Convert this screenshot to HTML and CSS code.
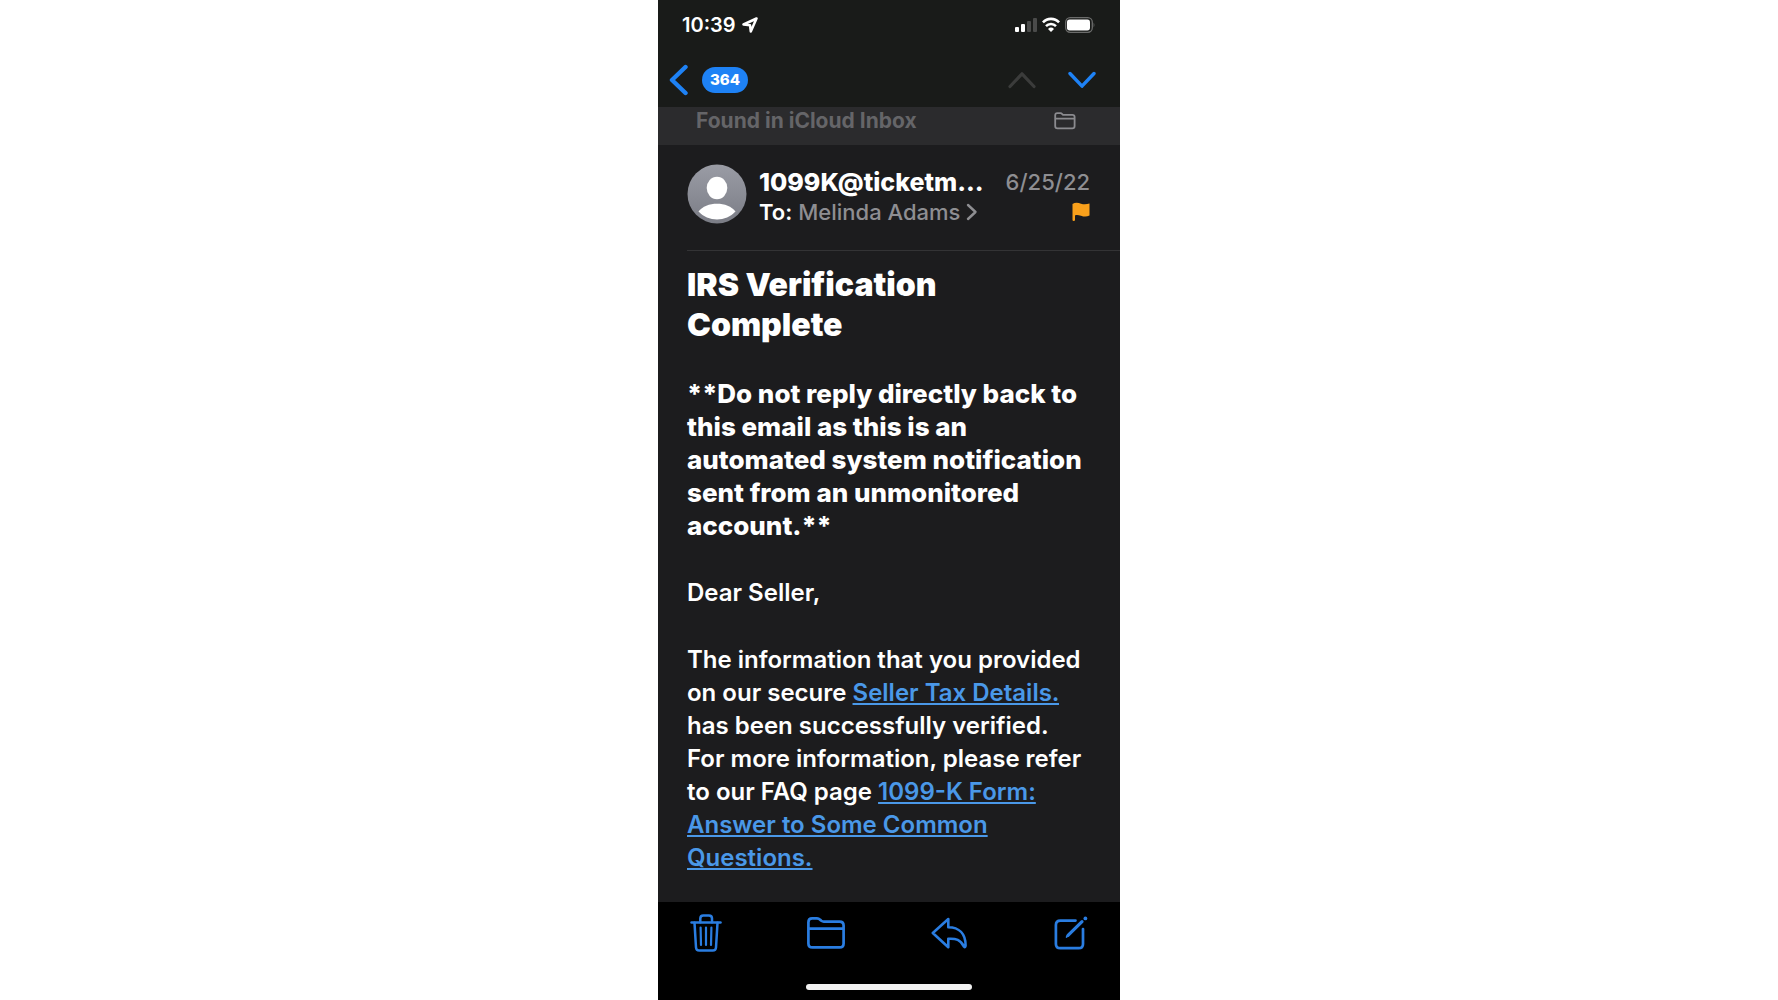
FILE: index.html
```html
<!DOCTYPE html>
<html lang="en">
<head>
  <meta charset="UTF-8" />
  <meta name="viewport" content="width=device-width, initial-scale=1.0" />
  <title>IRS Verification Complete</title>
  <link rel="stylesheet" href="styles.css">
</head>
<body>
  <div class="phone">
    <header class="top">
      <div class="status-bar">
        <span class="time">10:39</span>
        <svg class="location" width="16" height="16" viewBox="0 0 16 16">
          <path d="M14.5 1.5 L1.5 7.5 L8 8.2 L8.8 14.5 Z" fill="none" stroke="#fff" stroke-width="2.5" stroke-linejoin="round"/>
        </svg>
        <div class="status-icons">
          <svg width="22" height="16" viewBox="0 0 22 16">
            <rect x="0" y="10" width="4" height="5" rx="1" fill="#fff"/>
            <rect x="6" y="7" width="4" height="8" rx="1" fill="#fff"/>
            <rect x="12" y="4" width="4" height="11" rx="1" fill="#4a4b4a"/>
            <rect x="18" y="1" width="4" height="14" rx="1" fill="#4a4b4a"/>
          </svg>
          <svg width="18" height="16" viewBox="0 0 18 16">
            <path d="M0.9 5.4 A11 11 0 0 1 17.1 5.4" fill="none" stroke="#fff" stroke-width="2.7"/>
            <path d="M4 9.1 A6.8 6.8 0 0 1 14 9.1" fill="none" stroke="#fff" stroke-width="2.5"/>
            <path d="M9 15 L6 11.9 A4.3 4.3 0 0 1 12 11.9 Z" fill="#fff"/>
          </svg>
          <svg width="30" height="16" viewBox="0 0 30 16">
            <rect x="0.7" y="0.7" width="26.6" height="14.6" rx="4.5" fill="none" stroke="#6b6c6b" stroke-width="1.3"/>
            <rect x="2" y="2.6" width="23" height="10.8" rx="2.6" fill="#fff"/>
            <path d="M28.6 5.4 Q30.2 8 28.6 10.6 Z" fill="#6b6c6b"/>
          </svg>
        </div>
      </div>
      <nav class="nav-bar">
        <button class="back" aria-label="Back to inbox, 364 unread">
          <svg width="20" height="32" viewBox="0 0 20 32">
            <path d="M16.5 3 L3 16 L16.5 29" fill="none" stroke="#1e82f5" stroke-width="4.4" stroke-linecap="round" stroke-linejoin="round"/>
          </svg>
          <span class="badge">364</span>
        </button>
        <div class="arrows">
          <button aria-label="Previous message" disabled>
            <svg width="28" height="18" viewBox="0 0 28 18">
              <path d="M2 15.5 L14 2.8 L26 15.5" fill="none" stroke="#3b3c3b" stroke-width="3.2" stroke-linecap="round" stroke-linejoin="round"/>
            </svg>
          </button>
          <button aria-label="Next message">
            <svg width="28" height="18" viewBox="0 0 28 18">
              <path d="M2 2.5 L14 15.2 L26 2.5" fill="none" stroke="#1e82f5" stroke-width="3.4" stroke-linecap="round" stroke-linejoin="round"/>
            </svg>
          </button>
        </div>
      </nav>
    </header>

    <div class="found">
      <span>Found in iCloud Inbox</span>
      <svg width="22" height="18" viewBox="0 0 22 18">
        <path d="M1.2 14 V3.2 Q1.2 1.2 3.2 1.2 H6.5 Q7.4 1.2 8 1.9 L9 2.9 H18.3 Q20.6 2.9 20.6 5 V14 Q20.6 16.4 18.3 16.4 H3.5 Q1.2 16.4 1.2 14 Z M1.2 6.6 H20.6" fill="none" stroke="#8b8b8f" stroke-width="1.8"/>
      </svg>
    </div>

    <main class="message">
      <div class="message-head">
        <svg class="avatar" width="60" height="60" viewBox="0 0 60 60">
          <defs>
            <linearGradient id="avatarBg" x1="0" y1="0" x2="0" y2="1">
              <stop offset="0" stop-color="#9a9ca5"/>
              <stop offset="1" stop-color="#7b7d86"/>
            </linearGradient>
          </defs>
          <circle cx="30" cy="30" r="29.5" fill="url(#avatarBg)"/>
          <ellipse cx="30" cy="24" rx="10.3" ry="11.3" fill="#fff"/>
          <path d="M11.5 47.5 C19 37 41 37 48.5 47.5 C39 58 21 58 11.5 47.5 Z" fill="#fff"/>
        </svg>
        <div class="people">
          <div class="row">
            <span class="sender">1099K@ticketm...</span>
            <span class="date">6/25/22</span>
          </div>
          <div class="row">
            <span class="to"><b>To:</b> Melinda Adams
              <svg width="12" height="18" viewBox="0 0 12 18">
                <path d="M2 2 L9.5 9 L2 16" fill="none" stroke="#8e8e92" stroke-width="2.4" stroke-linecap="round" stroke-linejoin="round"/>
              </svg>
            </span>
            <svg class="flag" width="18" height="20" viewBox="0 0 18 20">
              <path d="M0.5 2 C3 0.4 6 0.6 9 1.7 C12 2.6 14.5 2.4 17.5 1.6 V13.6 C14.5 15 12 14.8 9 13.7 C6.5 13 4.5 12.8 3 13.4 V18 Q3 19 1.8 19 Q0.5 19 0.5 18 Z" fill="#f9a01b"/>
            </svg>
          </div>
        </div>
      </div>

      <div class="message-body">
        <h1>IRS Verification<br> Complete</h1>
        <p class="notice">**Do not reply directly back to this email as this is an<br> automated system notification sent from an unmonitored account.**</p>
        <p>Dear Seller,</p>
        <p>The information that you provided on our secure <a href="#">Seller Tax Details.</a> has been successfully verified.<br>
          For more information, please refer to our FAQ page <a href="#">1099-K Form: Answer to Some Common Questions.</a></p>
      </div>
    </main>

    <footer class="bottom">
      <div class="toolbar">
        <button aria-label="Delete">
          <svg width="32" height="38" viewBox="0 0 32 38">
            <g fill="none" stroke="#2a7de1" stroke-width="2.5" stroke-linecap="round" stroke-linejoin="round">
              <path d="M1.5 8.5 H30.5"/>
              <path d="M10.3 8.3 V4.5 Q10.3 1.5 13.3 1.5 H19 Q22 1.5 22 4.5 V8.3"/>
              <path d="M4.5 8.8 L6 33.5 Q6.2 36.6 9.3 36.6 H22.7 Q25.8 36.6 26 33.5 L27.5 8.8"/>
              <path d="M10.6 13.5 L11 31 M16 13.5 V31 M21.4 13.5 L21 31" stroke-width="2.2"/>
            </g>
          </svg>
        </button>
        <button aria-label="Move to folder">
          <svg width="38" height="32" viewBox="0 0 38 32">
            <path d="M1.4 26.5 V5.2 Q1.4 1.4 5.2 1.4 H10 Q11.8 1.4 13 2.6 L14.4 3.8 Q15.4 4.6 16.8 4.6 H32.6 Q36.6 4.6 36.6 8.6 V26.5 Q36.6 30.4 32.6 30.4 H5.4 Q1.4 30.4 1.4 26.5 Z M1.4 11.6 H36.6" fill="none" stroke="#2a7de1" stroke-width="2.7" stroke-linejoin="round"/>
          </svg>
        </button>
        <button aria-label="Reply">
          <svg width="38" height="32" viewBox="0 0 38 32">
            <path d="M17.3 2 L1.8 16 L17.3 30.2 V21.8 C25 21.3 29.5 22.6 33 29.6 Q34.4 31 34.6 28.5 C34.6 16.5 28 10.3 17.3 10.2 Z" fill="none" stroke="#2a7de1" stroke-width="2.6" stroke-linejoin="round"/>
          </svg>
        </button>
        <button aria-label="Compose">
          <svg width="34" height="34" viewBox="0 0 34 34">
            <g fill="none" stroke="#2a7de1" stroke-linecap="round" stroke-linejoin="round">
              <path d="M21.5 4.6 H6.4 Q1.9 4.6 1.9 9 V28 Q1.9 32.2 6.4 32.2 H24.6 Q29 32.2 29 28 V13" stroke-width="2.7"/>
              <path d="M28 5.6 L14 19.4" stroke-width="3.2"/>
              <path d="M14 19 L12.6 21" stroke-width="1.8"/>
            </g>
            <circle cx="31.4" cy="2.4" r="1.9" fill="#2a7de1"/>
          </svg>
        </button>
      </div>
      <div class="home-indicator"></div>
    </footer>
  </div>
</body>
</html>
```
FILE: styles.css
```css
* {
  box-sizing: border-box;
}
body {
  margin: 0;
  background-color: #fff;
  font-family: Inter, "Liberation Sans", sans-serif;
}
svg {
  display: block;
}
button {
  display: flex;
  align-items: center;
  padding: 0;
  border: none;
  background: none;
  font-family: inherit;
  cursor: pointer;
}
.phone {
  display: flex;
  flex-direction: column;
  max-width: 462px;
  min-height: 100vh;
  margin: 0 auto;
  background-color: #1c1c1e;
  color: #fff;
}

/* status bar and navigation */
.top {
  background-color: #191b19;
}
.status-bar {
  display: flex;
  align-items: center;
  gap: 6px;
  height: 50px;
  padding: 0 25px 0 24px;
}
.time {
  font-size: 20px;
  font-weight: 600;
}
.status-icons {
  display: flex;
  gap: 5px;
  margin-left: auto;
}
.nav-bar {
  display: flex;
  align-items: center;
  justify-content: space-between;
  height: 57px;
  padding: 2px 24px 0 11px;
}
.back {
  gap: 13px;
}
.badge {
  padding: 0 8px;
  border-radius: 13px;
  background-color: #1e82f5;
  color: #fff;
  font-size: 15px;
  font-weight: 800;
  line-height: 26px;
}
.arrows {
  display: flex;
  gap: 32px;
}

.found {
  display: flex;
  justify-content: space-between;
  height: 38px;
  padding: 0 44px 0 38px;
  background-color: #2b2b2d;
  color: #656568;
  font-size: 21px;
  font-weight: 700;
  line-height: 27px;
}
.found svg {
  margin-top: 5px;
}

/* message */
.message {
  flex: 1;
  padding-left: 29px;
}
.message-head {
  display: flex;
  gap: 12px;
  padding: 19px 30px 23px 0;
  border-bottom: 1px solid #333335;
}
.avatar {
  flex-shrink: 0;
}
.people {
  flex: 1;
  padding-top: 3px;
}
.row {
  display: flex;
  align-items: center;
  justify-content: space-between;
  height: 30px;
  white-space: nowrap;
}
.sender {
  font-size: 25px;
  font-weight: 800;
}
.date, .to {
  color: #8e8e92;
  font-size: 22px;
  font-weight: 500;
}
.to {
  display: flex;
  align-items: center;
  gap: 6px;
}
.to b {
  color: #fff;
  font-weight: 600;
}
.message-body {
  padding: 14px 29px 0 0;
}
h1 {
  margin: 0 0 32px;
  font-size: 32px;
  font-weight: 900;
  line-height: 40px;
}
p {
  margin: 0 0 34px;
  font-size: 24px;
  font-weight: 600;
  line-height: 33px;
}
p:last-child {
  margin-bottom: 20px;
}
.notice {
  font-size: 26px;
  font-weight: 800;
}
a {
  color: #4a98e8;
}

/* bottom toolbar */
.bottom {
  height: 98px;
  padding: 11px 32px 0;
  background-color: #000;
}
.toolbar {
  display: flex;
  align-items: center;
  justify-content: space-between;
  height: 40px;
}
.home-indicator {
  width: 166px;
  height: 6px;
  margin: 31px auto 0;
  border-radius: 3px;
  background-color: #f2f2f2;
}
```
